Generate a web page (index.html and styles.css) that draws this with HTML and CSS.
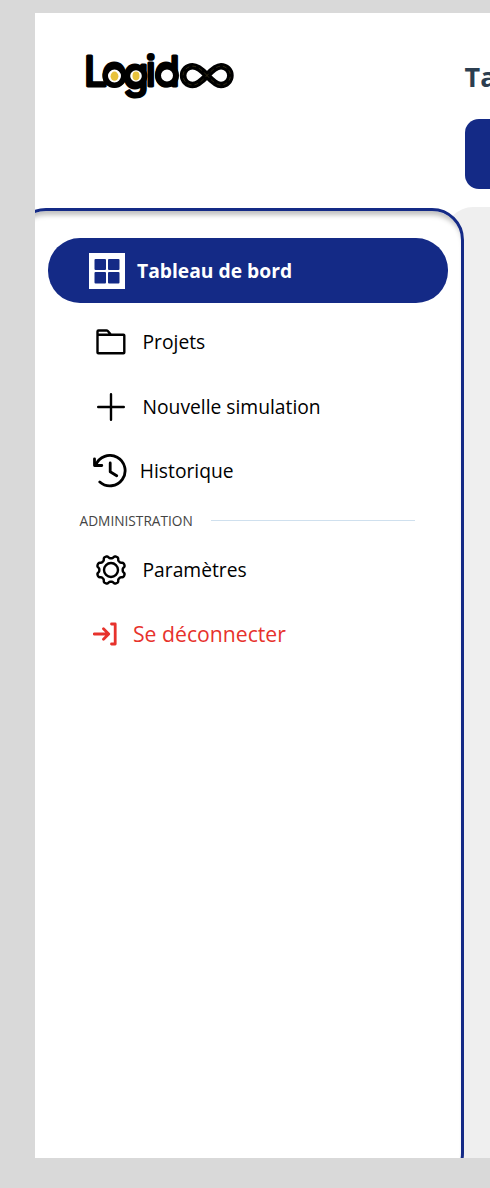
FILE: index.html
```html
<!DOCTYPE html>
<html lang="fr">
<head>
<meta charset="utf-8">
<title>Logidoo</title>
<link rel="stylesheet" href="styles.css">
</head>
<body>
<div class="app">
  <aside class="side">
    <header class="brand">
      <svg class="logo" viewBox="0 0 152 50" role="img" aria-label="Logidoo">
        <text class="wordmark" x="0 18 39.300 61.800 70.600" y="35.500 35.500 37.500 35.500 35.500">Logid</text>
        <circle cx="30.500" cy="26" r="9.300" fill="#fff" stroke="#000" stroke-width="5.600"/>
        <circle cx="52" cy="26" r="8.600" fill="#fff" stroke="#000" stroke-width="5.600"/>
        <circle cx="83" cy="25.500" r="9" fill="#fff" stroke="#000" stroke-width="6"/>
        <ellipse cx="30.500" cy="26.200" rx="3.900" ry="4.600" fill="#e8c23c"/>
        <ellipse cx="52" cy="26" rx="3.500" ry="4.400" fill="#e8c23c"/>
        <path class="road" d="M123 25.500C117 19 113 16.200 108.500 16.200a9.400 9.400 0 0 0 0 18.800C113 35 117 32 123 25.500S133 16.200 137 16.200a9.400 9.400 0 0 1 0 18.800C133 35 129 32 123 25.500Z"/>
        <path class="lane" d="M123 25.500C117 19 113 16.200 108.500 16.200a9.400 9.400 0 0 0 0 18.800C113 35 117 32 123 25.500S133 16.200 137 16.200a9.400 9.400 0 0 1 0 18.800C133 35 129 32 123 25.500Z"/>
      </svg>
    </header>
    <nav class="panel">
      <a class="item active">
        <svg class="ic-grid" viewBox="0 0 36 36"><path fill="#fff" d="M0 0h36v36H0z"/><g fill="#142a86"><rect x="5.500" y="6" width="11.500" height="11" rx="1"/><rect x="19" y="6" width="11.500" height="11" rx="1"/><rect x="5.500" y="19" width="11.500" height="11.500" rx="1"/><rect x="19" y="19" width="11.500" height="11.500" rx="1"/></g></svg>
        <span>Tableau de bord</span>
      </a>
      <a class="item projects">
        <svg class="ic-folder" viewBox="0 0 30 26"><path d="M1.500 5.800V2.500q0-1 1-1h8q.8 0 1.300.5L15 5.800M1.500 5.800h26q.8 0 .8.800v16.800q0 .8-.8.800h-25.200q-.8 0-.8-.8Z"/></svg>
        <span>Projets</span>
      </a>
      <a class="item simulation">
        <svg class="ic-plus" viewBox="0 0 28 28"><path d="M14 1.200v25.600M1.200 14h25.600"/></svg>
        <span>Nouvelle simulation</span>
      </a>
      <a class="item history">
        <svg class="ic-history" viewBox="0 0 34 34"><path d="M2.800 11A15.200 15.200 0 1 1 6.800 28M1.500 4.800v6.700h7.300M17.200 9v8.800l6.500 4"/></svg>
        <span>Historique</span>
      </a>
      <div class="section"><span>ADMINISTRATION</span><hr></div>
      <a class="item settings">
        <svg class="ic-gear" viewBox="0 0 32 32"><circle cx="16" cy="16" r="7"/><path id="gear" d=""/></svg>
        <span>Paramètres</span>
      </a>
      <a class="item logout">
        <svg class="ic-logout" viewBox="0 0 24 24"><path d="M1.200 12h14M10.500 6.800 15.700 12l-5.200 5.200M18.500 2h3.700v20h-3.700"/></svg>
        <span>Se déconnecter</span>
      </a>
    </nav>
  </aside>
  <main class="main">
    <h1>Tableau de bord</h1>
    <div class="banner"></div>
    <div class="content"></div>
  </main>
</div>
<script src="gear.js"></script>
</body>
</html>
```
FILE: gear.js
```js
// Builds the scalloped outline of the settings cog: eight rounded teeth.
var points = [];
for (var i = 0; i < 192; i++) {
  var a = i / 192 * Math.PI * 2;
  var wave = Math.cos(8 * (a - Math.PI / 8));
  var r = 13 + 1.3 * Math.tanh(1.8 * wave) / Math.tanh(1.8);
  points.push((16 + r * Math.cos(a)).toFixed(2) + ' ' + (16 + r * Math.sin(a)).toFixed(2));
}
document.getElementById('gear').setAttribute('d', 'M' + points.join('L') + 'Z');
```
FILE: styles.css
```css
* { box-sizing: border-box; }
body {
  margin: 0;
  padding: 12.5px 0 30px 35px;
  height: 1188px;
  background: #d9d9d9;
  font-family: "Open Sans", "Noto Sans", sans-serif;
  overflow: hidden;
}
.app {
  display: flex;
  height: 1145.5px;
  background: #fff;
  overflow: hidden;
}
.side {
  flex: 0 0 430px;
  position: relative;
  z-index: 1;
}
.brand { height: 195.500px; padding: 37.500px 0 0 49px; }
.logo { display: block; width: 152px; height: 50px; overflow: visible; }
.wordmark {
  font-family: Inter, sans-serif;
  font-size: 41px;
  stroke: #000;
  stroke-width: 3px;
  stroke-linejoin: round;
}
.road { fill: none; stroke: #000; stroke-width: 6.600px; }
.lane { fill: none; stroke: #5d5026; stroke-width: .5px; stroke-dasharray: 4 3; }
.panel {
  width: 449.500px;
  height: 977px;
  margin-left: -21px;
  padding: 27px 13px 0 30.500px;
  border: 3px solid #142a86;
  border-radius: 32px;
  background: #fff;
  box-shadow: inset 0 7px 5px -3px rgba(0, 0, 0, .25);
}
.item {
  display: flex;
  align-items: center;
  height: 64.700px;
  font-size: 19.250px;
  line-height: 26px;
  color: #000;
}
.item svg { flex: none; fill: none; stroke: #000; stroke-width: 2.400px; stroke-linecap: round; stroke-linejoin: round; }
.active {
  height: 65px;
  padding-left: 41.500px;
  border-radius: 32px;
  background: #142a86;
  color: #fff;
  font-weight: 700;
}
.active svg { width: 36px; height: 36px; margin-right: 12px; stroke: none; }
.projects { margin-top: 6.600px; padding-left: 48.500px; }
.ic-folder { width: 30px; height: 26px; margin-right: 16.500px; }
.simulation { padding-left: 49px; }
.ic-plus { width: 28px; height: 28px; margin-right: 18px; }
.history { padding-left: 45px; }
.ic-history { width: 34px; height: 34px; margin-right: 13.300px; }
.item .ic-history { stroke-width: 2.800px; }
.section {
  display: flex;
  align-items: center;
  gap: 18px;
  height: 34px;
  padding: 0 33px 0 32px;
  font-size: 13.700px;
  color: #444;
}
.section hr { flex: 1; height: 1px; margin: 0; border: 0; background: #cfe0ee; }
.settings { padding-left: 47.500px; }
.ic-gear { width: 32px; height: 32px; margin-right: 15.500px; }
.logout { height: 64px; padding-left: 45px; font-size: 21.200px; color: #e7322c; }
.ic-logout { width: 24px; height: 24px; margin-right: 16.500px; }
.item .ic-logout { stroke: #e7322c; stroke-width: 2.800px; }
.main { flex: 0 0 600px; margin-left: -20px; }
.main h1 {
  margin: 46px 0 0 19.500px;
  font-size: 27px;
  line-height: 36px;
  color: #2c3e50;
}
.banner {
  height: 70px;
  margin: 24px 0 0 19.500px;
  border-radius: 14px;
  background: #142a86;
}
.content {
  height: 960px;
  margin-top: 18px;
  border-radius: 28px;
  background: #efefef;
}
```
